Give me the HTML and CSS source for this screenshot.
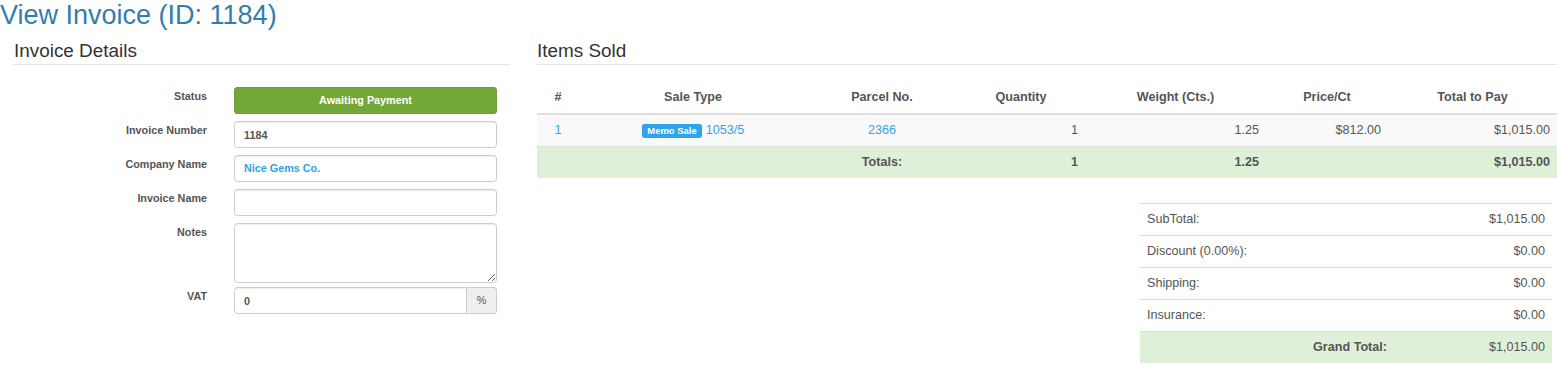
FILE: index.html
```html
<!DOCTYPE html>
<html lang="en">
<head>
    <meta charset="UTF-8">
    <meta name="viewport" content="width=device-width, initial-scale=1.0">
    <title>View Invoice (ID: 1184)</title>
    <link rel="stylesheet" href="styles.css">
</head>
<body>
    <h2 class="page-title">View Invoice (ID: 1184)</h2>

    <div class="invoice-layout">
        <!-- Left: invoice details form -->
        <div class="invoice-details">
            <h4 class="section-title">Invoice Details</h4>

            <form class="details-form">
                <div class="form-row">
                    <label>Status</label>
                    <div class="status-badge">Awaiting Payment</div>
                </div>
                <div class="form-row">
                    <label for="invoice-number">Invoice Number</label>
                    <input type="text" id="invoice-number" class="form-control" value="1184" readonly>
                </div>
                <div class="form-row">
                    <label>Company Name</label>
                    <div class="form-control"><a href="#" class="company-link">Nice Gems Co.</a></div>
                </div>
                <div class="form-row">
                    <label for="invoice-name">Invoice Name</label>
                    <input type="text" id="invoice-name" class="form-control">
                </div>
                <div class="form-row form-row--notes">
                    <label for="notes">Notes</label>
                    <textarea id="notes" class="form-control notes-field"></textarea>
                </div>
                <div class="form-row">
                    <label for="vat">VAT</label>
                    <div class="input-group">
                        <input type="text" id="vat" class="form-control" value="0">
                        <span class="input-addon">%</span>
                    </div>
                </div>
            </form>
        </div>

        <!-- Right: items sold + totals -->
        <div class="items-sold">
            <h4 class="section-title">Items Sold</h4>

            <table class="items-table">
                <colgroup>
                    <col style="width: 42px">
                    <col style="width: 228px">
                    <col style="width: 150px">
                    <col style="width: 128px">
                    <col style="width: 181px">
                    <col style="width: 122px">
                    <col>
                </colgroup>
                <thead>
                    <tr>
                        <th>#</th>
                        <th>Sale Type</th>
                        <th>Parcel No.</th>
                        <th>Quantity</th>
                        <th>Weight (Cts.)</th>
                        <th>Price/Ct</th>
                        <th>Total to Pay</th>
                    </tr>
                </thead>
                <tbody>
                    <tr class="item-row">
                        <td class="center"><a href="#">1</a></td>
                        <td class="center"><span class="sale-label">Memo Sale</span> <a href="#">1053/5</a></td>
                        <td class="center"><a href="#">2366</a></td>
                        <td class="right">1</td>
                        <td class="right">1.25</td>
                        <td class="right">$812.00</td>
                        <td class="right">$1,015.00</td>
                    </tr>
                    <tr class="totals-row">
                        <td></td>
                        <td></td>
                        <td class="center">Totals:</td>
                        <td class="right">1</td>
                        <td class="right">1.25</td>
                        <td></td>
                        <td class="right">$1,015.00</td>
                    </tr>
                </tbody>
            </table>

            <table class="summary-table">
                <tr>
                    <td>SubTotal:</td>
                    <td class="right">$1,015.00</td>
                </tr>
                <tr>
                    <td>Discount (0.00%):</td>
                    <td class="right">$0.00</td>
                </tr>
                <tr>
                    <td>Shipping:</td>
                    <td class="right">$0.00</td>
                </tr>
                <tr>
                    <td>Insurance:</td>
                    <td class="right">$0.00</td>
                </tr>
                <tr class="grand-total">
                    <td class="right"><strong>Grand Total:</strong></td>
                    <td class="right">$1,015.00</td>
                </tr>
            </table>
        </div>
    </div>
</body>
</html>
```
FILE: styles.css
```css
* {
    margin: 0;
    padding: 0;
    box-sizing: border-box;
}

body {
    font-family: 'Liberation Sans', Arial, sans-serif;
    font-size: 12.6px;
    line-height: 1.42857;
    color: #555555;
    background: #ffffff;
}

a {
    color: #2fa4e7;
    text-decoration: none;
}

.page-title {
    font-size: 27px;
    font-weight: 400;
    line-height: 30px;
    color: #317eac;
    margin-bottom: 7px;
}

.invoice-layout {
    display: grid;
    grid-template-columns: 497px 1fr;
    column-gap: 27px;
    padding-left: 13px;
}

.section-title {
    font-size: 18.9px;
    font-weight: 400;
    line-height: 27px;
    color: #333333;
    border-bottom: 1px solid #e5e5e5;
    margin-bottom: 17px;
    padding-left: 1px;
}

.items-sold .section-title {
    padding-left: 0;
}

/* Left form */
.details-form {
    padding-top: 5px;
}

.form-row {
    display: grid;
    grid-template-columns: 194px 263px;
    column-gap: 27px;
    margin-bottom: 7px;
}

.form-row label {
    text-align: right;
    font-size: 10.8px;
    font-weight: 700;
    line-height: 15px;
    padding-top: 2px;
    color: #555555;
}

.form-row--notes {
    margin-bottom: 4px;
}

.status-badge {
    height: 27px;
    line-height: 25px;
    background: #73a839;
    border: 1px solid #6e9f37;
    border-radius: 3px;
    color: #ffffff;
    font-size: 10.8px;
    font-weight: 700;
    text-align: center;
}

.form-control {
    display: block;
    width: 100%;
    height: 27px;
    padding: 0 9px;
    border: 1px solid #cccccc;
    border-radius: 3.6px;
    font-family: inherit;
    font-size: 10.8px;
    font-weight: 700;
    line-height: 25px;
    color: #555555;
    background: #ffffff;
    box-shadow: inset 0 1px 1px rgba(0, 0, 0, 0.075);
    outline: none;
}

.company-link {
    color: #2fa4e7;
}

.notes-field {
    height: 60px;
    resize: vertical;
}

.input-group {
    display: flex;
}

.input-group .form-control {
    flex: 1;
    border-radius: 3.6px 0 0 3.6px;
}

.input-addon {
    width: 30px;
    height: 27px;
    line-height: 25px;
    text-align: center;
    font-size: 10.8px;
    background: #eeeeee;
    border: 1px solid #cccccc;
    border-left: none;
    border-radius: 0 3.6px 3.6px 0;
    color: #555555;
}

/* Items table */
.items-table {
    width: 100%;
    table-layout: fixed;
    border-collapse: collapse;
}

.items-table th {
    font-weight: 700;
    text-align: center;
    padding: 6px 7px;
    line-height: 19px;
    border-bottom: 2px solid #dddddd;
}

.items-table td {
    padding: 6px 7px;
    line-height: 19px;
    border-top: 1px solid #dddddd;
}

.item-row {
    background: #f9f9f9;
}

.totals-row {
    background: #dff0d8;
    font-weight: 700;
}

.center {
    text-align: center;
}

.right {
    text-align: right;
}

.sale-label {
    display: inline-block;
    font-size: 75%;
    font-weight: 700;
    line-height: 1;
    padding: 0.2em 0.6em 0.3em;
    border-radius: 0.25em;
    background: #2fa4e7;
    color: #ffffff;
    vertical-align: baseline;
}

/* Summary table */
.summary-table {
    width: 412px;
    margin: 25px 5px 0 auto;
    border-collapse: collapse;
}

.summary-table td {
    padding: 6px 7px;
    line-height: 19px;
    border-top: 1px solid #dddddd;
}

.summary-table td:first-child {
    width: 254px;
}

.grand-total {
    background: #dff0d8;
}
```
